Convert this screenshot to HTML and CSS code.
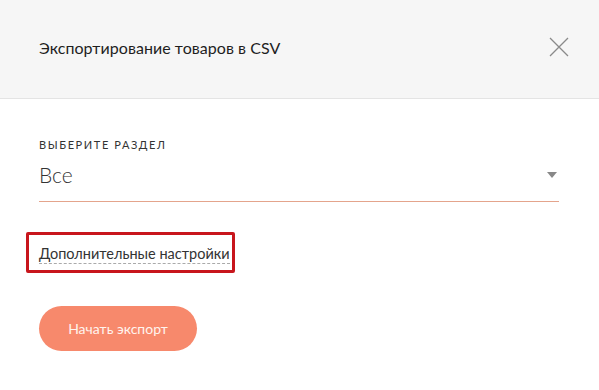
FILE: index.html
```html
<!DOCTYPE html>
<html lang="ru">
<head>
<meta charset="utf-8">
<link rel="stylesheet" href="styles.css">
</head>
<body>
<div class="modal">
  <header class="modal-header">
    <h1 class="modal-title">Экспортирование товаров в CSV</h1>
    <button class="close" aria-label="Закрыть">
      <svg width="20" height="20" viewBox="0 0 20 20"><path d="M1 1 L19 19 M19 1 L1 19" stroke="#8a8a8a" stroke-width="1.3" fill="none"/></svg>
    </button>
  </header>
  <div class="modal-body">
    <div class="field">
      <div class="field-label">Выберите раздел</div>
      <div class="select">
        <span class="select-value">Все</span>
        <span class="select-arrow"></span>
      </div>
    </div>
    <div class="extra">
      <span class="extra-link">Дополнительные настройки</span>
    </div>
    <button class="btn">Начать экспорт</button>
  </div>
</div>
</body>
</html>
```

FILE: styles.css
```css
html, body { margin: 0; padding: 0; background: #fff; }
body { font-family: "Lato", "Noto Sans", sans-serif; color: #222; }
.modal { width: 599px; height: 390px; }
.modal-header {
  height: 99px;
  background: #f6f6f6;
  border-bottom: 1px solid #e4e4e4;
  display: flex;
  align-items: center;
  justify-content: space-between;
  padding: 0 30px 0 39px;
  box-sizing: border-box;
}
.modal-title { margin: 0; font-size: 16px; letter-spacing: 0.05px; font-weight: 400; color: #1e1e1e; padding-bottom: 4px; }
.close { background: none; border: 0; padding: 0; width: 20px; height: 20px; margin-bottom: 4px; }
.close svg { display: block; }
.modal-body { padding: 39px 40px 0 39px; }
.field-label { font-size: 11px; letter-spacing: 1.6px; text-transform: uppercase; color: #333; line-height: 14px; }
.select {
  display: flex; align-items: center; justify-content: space-between;
  border-bottom: 1px solid #e4a48c;
  height: 50px;
  box-sizing: border-box;
  padding-bottom: 4px;
}
.select-value { font-size: 21px; color: #333; font-weight: 300; }
.select-arrow {
  width: 0; height: 0;
  border-left: 5px solid transparent; border-right: 5px solid transparent;
  border-top: 6px solid #888;
  margin-right: 2px;
}
.extra {
  margin: 30px 0 0 -13px;
  width: 209px; height: 41px;
  box-sizing: border-box;
  border: 3px solid #c8161d;
  border-radius: 2px;
  padding: 8px 0 0 10px;
}
.extra-link { font-size: 14.5px; color: #333; border-bottom: 1px dashed #aaa; padding-bottom: 1px; }
.btn {
  margin-top: 33px;
  width: 158px; height: 45px;
  border: 0; border-radius: 23px;
  background: #f7896c;
  color: #fff4ee;
  font-family: inherit; font-size: 14px;
  display: block;
}
```
